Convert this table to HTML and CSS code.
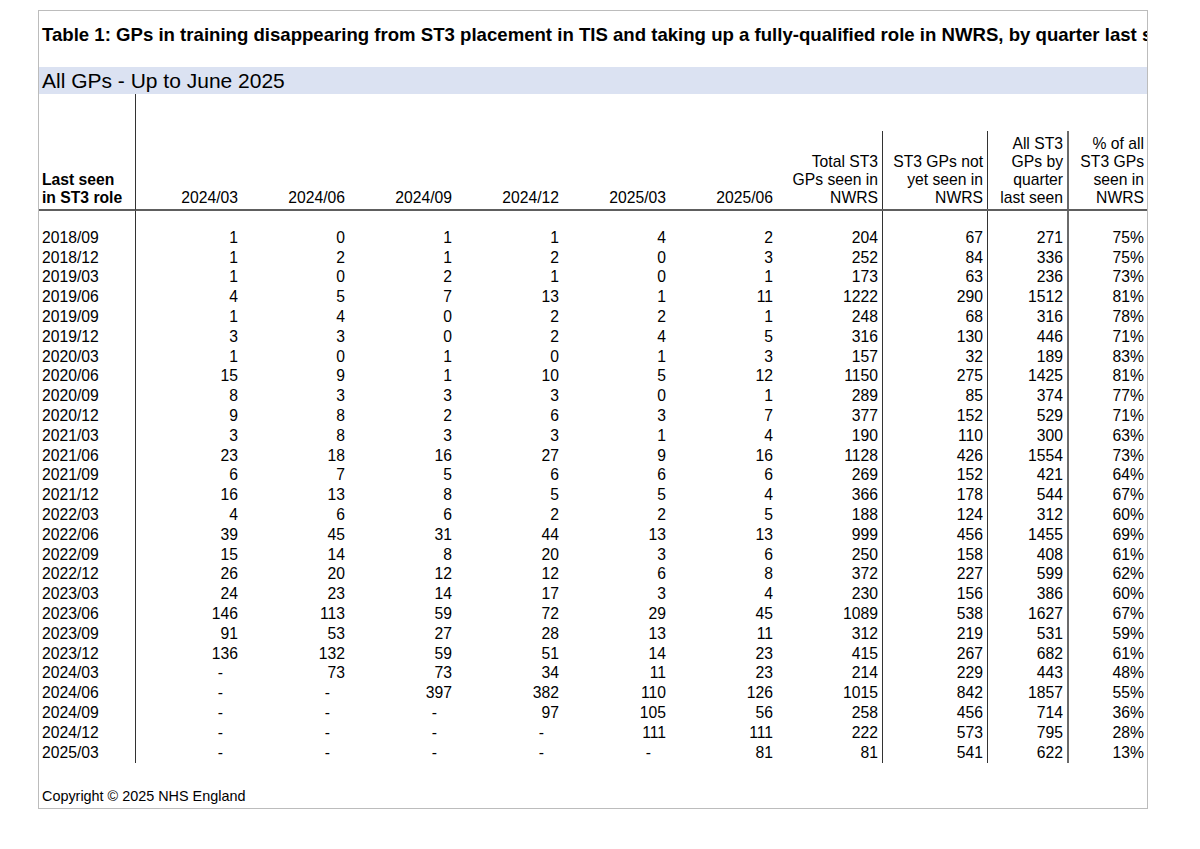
FILE: index.html
```html
<!DOCTYPE html>
<html lang="en">
<head>
<meta charset="utf-8">
<title>Table 1: GPs in training</title>
<link rel="stylesheet" href="styles.css">
</head>
<body>
<div class="sheet">
  <h1 class="title">Table 1: GPs in training disappearing from ST3 placement in TIS and taking up a fully-qualified role in NWRS, by quarter last seen in ST3 role</h1>
  <div class="band">All GPs - Up to June 2025</div>
  <table class="data">
    <colgroup>
      <col class="c0"><col class="c1"><col class="cq"><col class="cq"><col class="cq"><col class="cq"><col class="cq"><col class="c7"><col class="c8"><col class="c9"><col class="c10">
    </colgroup>
    <thead>
      <tr>
        <th class="first">Last seen<br>in ST3 role</th>
        <th>2024/03</th><th>2024/06</th><th>2024/09</th><th>2024/12</th><th>2025/03</th><th>2025/06</th>
        <th class="boxed"><div class="hbox line">Total ST3<br>GPs seen in<br>NWRS</div></th>
        <th class="boxed"><div class="hbox line">ST3 GPs not<br>yet seen in<br>NWRS</div></th>
        <th class="boxed"><div class="hbox line thick">All ST3<br>GPs by<br>quarter<br>last seen</div></th>
        <th class="boxed"><div class="hbox pct">% of all<br>ST3 GPs<br>seen in<br>NWRS</div></th>
      </tr>
    </thead>
    <tbody id="rows">
      <tr class="spacer"><td class="first"></td><td></td><td></td><td></td><td></td><td></td><td></td><td class="line"></td><td class="line"></td><td class="line thick"></td><td></td></tr>
    </tbody>
  </table>
  <p class="copy">Copyright © 2025 NHS England</p>
</div>
<script src="app.js"></script>
</body>
</html>
```

FILE: app.js
```js
const data = [
  ["2018/09",1,0,1,1,4,2,204,67,271,"75%"],
  ["2018/12",1,2,1,2,0,3,252,84,336,"75%"],
  ["2019/03",1,0,2,1,0,1,173,63,236,"73%"],
  ["2019/06",4,5,7,13,1,11,1222,290,1512,"81%"],
  ["2019/09",1,4,0,2,2,1,248,68,316,"78%"],
  ["2019/12",3,3,0,2,4,5,316,130,446,"71%"],
  ["2020/03",1,0,1,0,1,3,157,32,189,"83%"],
  ["2020/06",15,9,1,10,5,12,1150,275,1425,"81%"],
  ["2020/09",8,3,3,3,0,1,289,85,374,"77%"],
  ["2020/12",9,8,2,6,3,7,377,152,529,"71%"],
  ["2021/03",3,8,3,3,1,4,190,110,300,"63%"],
  ["2021/06",23,18,16,27,9,16,1128,426,1554,"73%"],
  ["2021/09",6,7,5,6,6,6,269,152,421,"64%"],
  ["2021/12",16,13,8,5,5,4,366,178,544,"67%"],
  ["2022/03",4,6,6,2,2,5,188,124,312,"60%"],
  ["2022/06",39,45,31,44,13,13,999,456,1455,"69%"],
  ["2022/09",15,14,8,20,3,6,250,158,408,"61%"],
  ["2022/12",26,20,12,12,6,8,372,227,599,"62%"],
  ["2023/03",24,23,14,17,3,4,230,156,386,"60%"],
  ["2023/06",146,113,59,72,29,45,1089,538,1627,"67%"],
  ["2023/09",91,53,27,28,13,11,312,219,531,"59%"],
  ["2023/12",136,132,59,51,14,23,415,267,682,"61%"],
  ["2024/03","-",73,73,34,11,23,214,229,443,"48%"],
  ["2024/06","-","-",397,382,110,126,1015,842,1857,"55%"],
  ["2024/09","-","-","-",97,105,56,258,456,714,"36%"],
  ["2024/12","-","-","-","-",111,111,222,573,795,"28%"],
  ["2025/03","-","-","-","-","-",81,81,541,622,"13%"]
];
const body = document.getElementById("rows");
const extra = ["", "", "", "", "", "", "", "line", "line", "line thick", ""];
data.forEach(r => {
  const tr = document.createElement("tr");
  r.forEach((v, i) => {
    const td = document.createElement("td");
    if (i === 0) td.className = "first";
    else if (extra[i]) td.className = extra[i];
    if (v === "-") {
      const s = document.createElement("span");
      s.className = "dash";
      s.textContent = "-";
      td.appendChild(s);
    } else {
      td.textContent = v;
    }
    tr.appendChild(td);
  });
  body.appendChild(tr);
});
```

FILE: styles.css
```css
html, body {
  margin: 0;
  padding: 0;
  background: #fff;
}
body {
  font-family: "Liberation Sans", Arial, sans-serif;
  color: #000;
}
.sheet {
  margin: 10px 0 0 38px;
  width: 1108px;
  border: 1px solid #bcbcbc;
  overflow: hidden;
}
.title {
  margin: 13px 0 0 0;
  padding-left: 3px;
  font-size: 18.6px;
  line-height: 22px;
  font-weight: bold;
  white-space: nowrap;
}
.band {
  margin-top: 21px;
  height: 27px;
  line-height: 27px;
  background: #dbe2f2;
  font-size: 21px;
  padding-left: 3px;
  white-space: nowrap;
}
.data {
  table-layout: fixed;
  border-collapse: separate;
  border-spacing: 0;
  width: 1108px;
  font-size: 15.7px;
}
col.c0 { width: 97px; }
col.c1 { width: 104px; }
col.cq { width: 107px; }
col.c7 { width: 108px; }
col.c8 { width: 105px; }
col.c9 { width: 81px; }
col.c10 { width: 78px; }

.data th {
  font-weight: normal;
  text-align: right;
  vertical-align: bottom;
  height: 113px;
  padding: 0 2px 2px 0;
  line-height: 18px;
  border-bottom: 2px solid #5e5e5e;
  white-space: nowrap;
}
.data th.first {
  text-align: left;
  font-weight: bold;
  padding-left: 3px;
  border-right: 1px solid #333;
}
.data th.boxed {
  padding: 0;
}
.hbox {
  height: 78px;
  display: flex;
  flex-direction: column;
  justify-content: flex-end;
  padding: 0 4px 2px 0;
  box-sizing: border-box;
}
.hbox.pct { padding-right: 3px; }
.line { border-right: 1px solid #333; }
.line.thick { border-right: 2px solid #6a6a6a; }

.data td {
  height: 19.8px;
  padding: 0 2px 0 0;
  text-align: right;
  line-height: 18px;
  white-space: nowrap;
}
.data td.first {
  text-align: left;
  padding-left: 3px;
  border-right: 1px solid #333;
}
.data td.line { padding-right: 4px; }
.data td:last-child { padding-right: 3px; }
.data tr.spacer td { height: 17px; }
.dash { padding-right: 15px; }

.copy {
  margin: 24px 0 0 0;
  padding: 0 0 3px 3px;
  font-size: 14.4px;
  line-height: 18px;
}
```
